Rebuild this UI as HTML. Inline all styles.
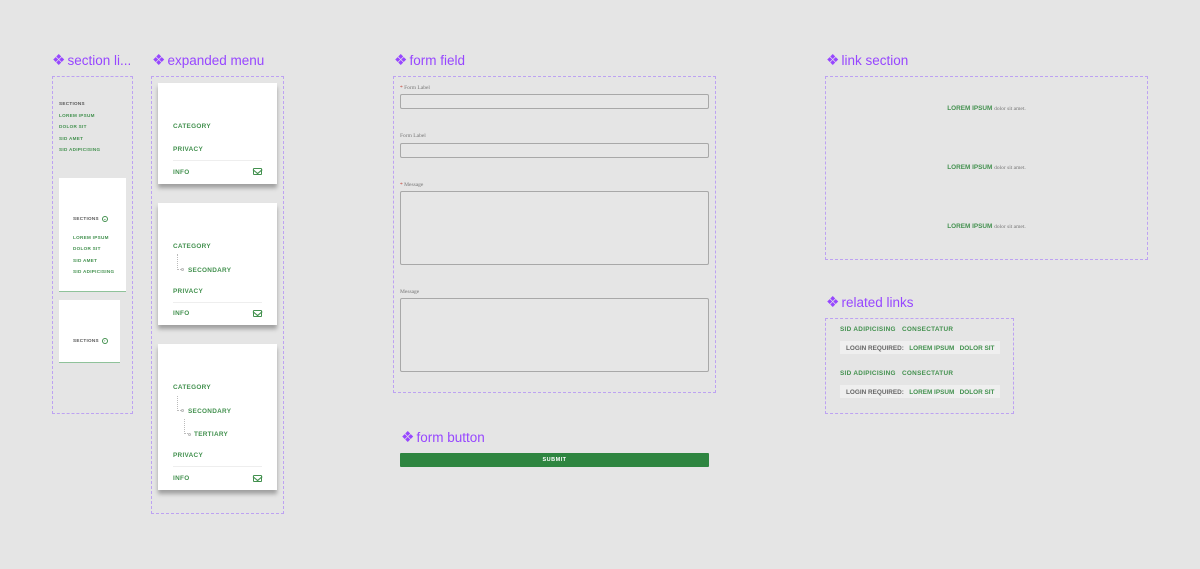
<!DOCTYPE html>
<html><head><meta charset="utf-8"><style>
*{margin:0;padding:0;box-sizing:border-box}
body{width:1200px;height:569px;background:#e5e5e5;position:relative;overflow:hidden;font-family:"Liberation Sans",sans-serif}
.a{position:absolute}
.t{position:absolute;color:#9747ff;font-size:13.5px;line-height:16px;white-space:nowrap}
.t b{font-weight:normal;font-size:15px;margin-right:2px}
.box{position:absolute;border:1.3px dashed #bda2f2}
.g{color:#43914f;font-weight:bold;letter-spacing:.3px;white-space:nowrap;position:absolute}
.k{color:#555;font-weight:bold;letter-spacing:.3px;white-space:nowrap;position:absolute}
.s5{font-size:4.6px}
.s6{font-size:6.4px}
.card{position:absolute;background:#fff;box-shadow:0 4px 4px rgba(0,0,0,.3)}
.inp{position:absolute;border:1px solid #a8a8a8;border-radius:2px;background:#e6e6e6}
.lab{position:absolute;font-family:"Liberation Serif",serif;font-size:5.5px;color:#777;white-space:nowrap}
.lab i{color:#c0392b;font-style:normal}
.env{position:absolute;width:9px;height:7px;border:1.2px solid #43914f;border-radius:1px}
.env:after{content:"";position:absolute;left:0;top:-2px;width:5px;height:5px;border-right:1.2px solid #43914f;border-bottom:1.2px solid #43914f;transform:translateX(0.6px) scaleX(1.2) rotate(45deg)}
.dv{position:absolute;height:1px;background:#eee}
.tr{position:absolute;border-left:1px dotted #bbb;border-bottom:1px dotted #bbb}
.dot{position:absolute;width:3px;height:3px;border:1px solid #bbb;border-radius:50%}
.circ{display:inline-block;width:6px;height:6px;border:0.8px solid #43914f;border-radius:50%;vertical-align:middle;margin-left:3px;font-size:4px;line-height:4px;text-align:center;color:#43914f}
</style></head><body>

<div class="t" style="left:52px;top:53px"><b>❖</b>section li...</div>
<div class="t" style="left:152px;top:53px"><b>❖</b>expanded menu</div>
<div class="t" style="left:394px;top:53px"><b>❖</b>form field</div>
<div class="t" style="left:401px;top:430px"><b>❖</b>form button</div>
<div class="t" style="left:826px;top:53px"><b>❖</b>link section</div>
<div class="t" style="left:826px;top:295px"><b>❖</b>related links</div>

<div class="box" style="left:52px;top:76px;width:81px;height:338px"></div>
<div class="k s5" style="left:59px;top:101px">SECTIONS</div>
<div class="g s5" style="left:59px;top:113px">LOREM IPSUM</div>
<div class="g s5" style="left:59px;top:124px">DOLOR SIT</div>
<div class="g s5" style="left:59px;top:136px">SID AMET</div>
<div class="g s5" style="left:59px;top:147px">SID ADIPICISING</div>
<div class="a" style="left:59px;top:178px;width:67px;height:114px;background:#fff;border-bottom:1px solid #8fc29a"></div>
<div class="k s5" style="left:73px;top:216px">SECTIONS<span class="circ">⌄</span></div>
<div class="g s5" style="left:73px;top:235px">LOREM IPSUM</div>
<div class="g s5" style="left:73px;top:246px">DOLOR SIT</div>
<div class="g s5" style="left:73px;top:258px">SID AMET</div>
<div class="g s5" style="left:73px;top:269px">SID ADIPICISING</div>
<div class="a" style="left:59px;top:300px;width:61px;height:63px;background:#fff;border-bottom:1px solid #8fc29a"></div>
<div class="k s5" style="left:73px;top:338px">SECTIONS<span class="circ">›</span></div>

<div class="box" style="left:151px;top:76px;width:133px;height:438px"></div>
<div class="card" style="left:158px;top:83px;width:119px;height:101px"></div>
<div class="g s6" style="left:173px;top:123px">CATEGORY</div>
<div class="g s6" style="left:173px;top:146px">PRIVACY</div>
<div class="dv" style="left:173px;top:160px;width:89px"></div>
<div class="g s6" style="left:173px;top:169px">INFO</div>
<div class="env" style="left:253px;top:168px"></div>

<div class="card" style="left:158px;top:203px;width:119px;height:122px"></div>
<div class="g s6" style="left:173px;top:243px">CATEGORY</div>
<div class="tr" style="left:177px;top:254px;width:4px;height:16px"></div>
<div class="dot" style="left:181px;top:268px"></div>
<div class="g s6" style="left:188px;top:267px">SECONDARY</div>
<div class="g s6" style="left:173px;top:288px">PRIVACY</div>
<div class="dv" style="left:173px;top:302px;width:89px"></div>
<div class="g s6" style="left:173px;top:310px">INFO</div>
<div class="env" style="left:253px;top:310px"></div>

<div class="card" style="left:158px;top:344px;width:119px;height:146px"></div>
<div class="g s6" style="left:173px;top:384px">CATEGORY</div>
<div class="tr" style="left:177px;top:396px;width:4px;height:15px"></div>
<div class="dot" style="left:181px;top:409px"></div>
<div class="g s6" style="left:188px;top:408px">SECONDARY</div>
<div class="tr" style="left:184px;top:419px;width:4px;height:15px"></div>
<div class="dot" style="left:188px;top:433px"></div>
<div class="g s6" style="left:194px;top:431px">TERTIARY</div>
<div class="g s6" style="left:173px;top:452px">PRIVACY</div>
<div class="dv" style="left:173px;top:466px;width:89px"></div>
<div class="g s6" style="left:173px;top:475px">INFO</div>
<div class="env" style="left:253px;top:475px"></div>

<div class="box" style="left:393px;top:76px;width:323px;height:317px"></div>
<div class="lab" style="left:400px;top:85px"><i>*</i> Form Label</div>
<div class="inp" style="left:400px;top:94px;width:309px;height:15px"></div>
<div class="lab" style="left:400px;top:133px">Form Label</div>
<div class="inp" style="left:400px;top:143px;width:309px;height:15px"></div>
<div class="lab" style="left:400px;top:182px"><i>*</i> Message</div>
<div class="inp" style="left:400px;top:191px;width:309px;height:74px"></div>
<div class="lab" style="left:400px;top:289px">Message</div>
<div class="inp" style="left:400px;top:298px;width:309px;height:74px"></div>

<div class="a" style="left:400px;top:453px;width:309px;height:14px;background:#2e8540;border-radius:1px;color:#fff;font-size:5.5px;font-weight:bold;letter-spacing:.5px;text-align:center;line-height:14px">SUBMIT</div>

<div class="box" style="left:825px;top:76px;width:323px;height:184px"></div>
<div class="a" style="left:825px;top:105px;width:323px;text-align:center;font-size:6.4px;white-space:nowrap"><span style="color:#43914f;font-weight:bold">LOREM IPSUM</span> <span style="font-family:'Liberation Serif',serif;color:#777;font-size:5.5px">dolor sit amet.</span></div>
<div class="a" style="left:825px;top:164px;width:323px;text-align:center;font-size:6.4px;white-space:nowrap"><span style="color:#43914f;font-weight:bold">LOREM IPSUM</span> <span style="font-family:'Liberation Serif',serif;color:#777;font-size:5.5px">dolor sit amet.</span></div>
<div class="a" style="left:825px;top:223px;width:323px;text-align:center;font-size:6.4px;white-space:nowrap"><span style="color:#43914f;font-weight:bold">LOREM IPSUM</span> <span style="font-family:'Liberation Serif',serif;color:#777;font-size:5.5px">dolor sit amet.</span></div>

<div class="box" style="left:825px;top:318px;width:189px;height:96px"></div>
<div class="g s6" style="left:840px;top:326px">SID ADIPICISING&nbsp;&nbsp;&nbsp;CONSECTATUR</div>
<div class="a" style="left:840px;top:341px;width:160px;height:13px;background:#efefef"></div>
<div class="a s6" style="left:846px;top:345px;white-space:nowrap;font-weight:bold"><span style="color:#666">LOGIN REQUIRED:</span>&nbsp;&nbsp;&nbsp;<span style="color:#43914f">LOREM IPSUM&nbsp;&nbsp;&nbsp;DOLOR SIT</span></div>
<div class="g s6" style="left:840px;top:370px">SID ADIPICISING&nbsp;&nbsp;&nbsp;CONSECTATUR</div>
<div class="a" style="left:840px;top:385px;width:160px;height:13px;background:#efefef"></div>
<div class="a s6" style="left:846px;top:389px;white-space:nowrap;font-weight:bold"><span style="color:#666">LOGIN REQUIRED:</span>&nbsp;&nbsp;&nbsp;<span style="color:#43914f">LOREM IPSUM&nbsp;&nbsp;&nbsp;DOLOR SIT</span></div>

</body></html>
